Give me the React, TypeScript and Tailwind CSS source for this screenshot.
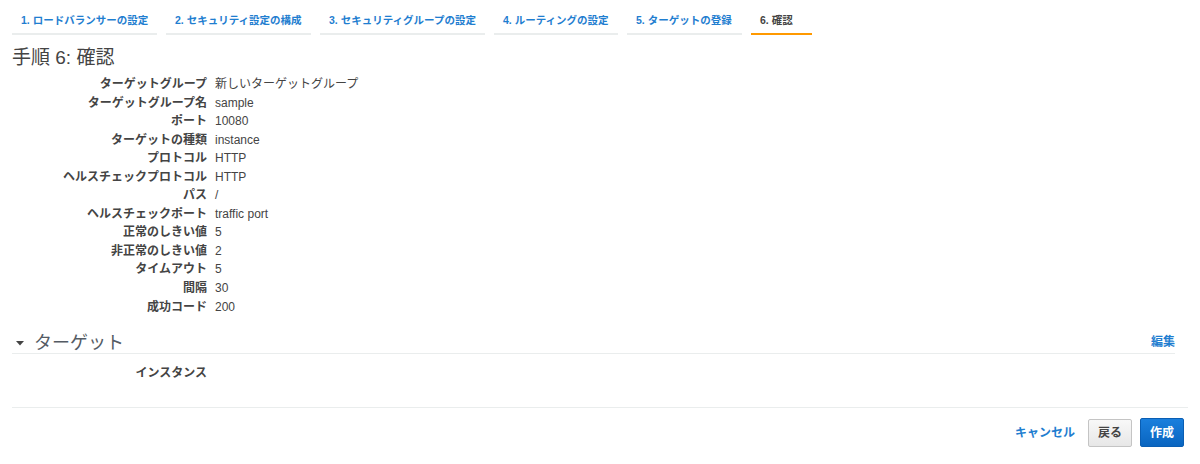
import React from 'react';

const tabs: { label: string; width: string }[] = [
  { label: '1. ロードバランサーの設定', width: 'w-[145px]' },
  { label: '2. セキュリティ設定の構成', width: 'w-[145px]' },
  { label: '3. セキュリティグループの設定', width: 'w-[165px]' },
  { label: '4. ルーティングの設定', width: 'w-[124px]' },
  { label: '5. ターゲットの登録', width: 'w-[115px]' },
  { label: '6. 確認', width: 'w-[61px]' },
];

const rows: [string, string][] = [
  ['ターゲットグループ', '新しいターゲットグループ'],
  ['ターゲットグループ名', 'sample'],
  ['ポート', '10080'],
  ['ターゲットの種類', 'instance'],
  ['プロトコル', 'HTTP'],
  ['ヘルスチェックプロトコル', 'HTTP'],
  ['パス', '/'],
  ['ヘルスチェックポート', 'traffic port'],
  ['正常のしきい値', '5'],
  ['非正常のしきい値', '2'],
  ['タイムアウト', '5'],
  ['間隔', '30'],
  ['成功コード', '200'],
];

const App: React.FC = () => {
  return (
    <div
      className="w-[1200px] h-[464px] bg-white text-[#444] overflow-hidden"
      style={{ fontFamily: '"Liberation Sans", "Noto Sans CJK JP", sans-serif' }}
    >
      <div className="px-3">
        {/* wizard steps */}
        <div className="flex gap-[9px] pt-[11px]">
          {tabs.map((t, i) => {
            const active = i === tabs.length - 1;
            return (
              <div
                key={t.label}
                className={`${t.width} px-[9px] h-[24px] text-[10.5px] font-bold leading-[18px] whitespace-nowrap border-b-2 ${
                  active ? 'border-[#f90] text-[#444]' : 'border-[#eaeded] text-[#1f7ed0]'
                }`}
              >
                {t.label}
              </div>
            );
          })}
        </div>

        <h1 className="text-[19px] leading-[24px] mt-[11px] text-[#444]">手順 6: 確認</h1>

        {/* summary */}
        <div className="mt-[5px] flex flex-col">
          {rows.map(([k, v]) => (
            <div key={k} className="flex text-[12px] leading-[18.55px]">
              <div className="w-[195px] text-right font-bold">{k}</div>
              <div className="pl-[8px]">{v}</div>
            </div>
          ))}
        </div>

        {/* targets section */}
        <div className="mt-[17px] w-[1163px] flex items-end justify-between border-b border-[#eaeded]">
          <div className="flex items-center">
            <svg width="10" height="8" viewBox="0 0 10 8" className="ml-[3px] mr-[9px]">
              <path d="M1 2h8L5 6.5z" fill="#444" />
            </svg>
            <span className="text-[18px] leading-[20px] text-[#545b64]">ターゲット</span>
          </div>
          <span className="text-[12px] font-bold text-[#1f7ed0] mb-[2px]">編集</span>
        </div>
        <div className="flex text-[12px] leading-[18px] mt-[10px]">
          <div className="w-[195px] text-right font-bold">インスタンス</div>
        </div>

        <div className="mt-[25px] border-t border-[#eaeded] w-[1176px]" />

        {/* footer buttons */}
        <div className="w-[1172px] flex justify-end items-center mt-[10px]">
          <span className="text-[12px] font-bold text-[#1f7ed0] mr-[13px]">キャンセル</span>
          <button className="h-[28px] w-[44px] text-[12px] font-bold text-[#444] rounded-[2px] border border-[#c4c4c4] bg-gradient-to-b from-[#f8f8f8] to-[#e7e7e7] mr-[8px]">
            戻る
          </button>
          <button className="h-[29px] w-[44px] text-[12px] font-bold text-white rounded-[2px] border border-[#0a5eb3] bg-gradient-to-b from-[#1a7fdd] to-[#0965c0]">
            作成
          </button>
        </div>
      </div>
    </div>
  );
};

export default App;
